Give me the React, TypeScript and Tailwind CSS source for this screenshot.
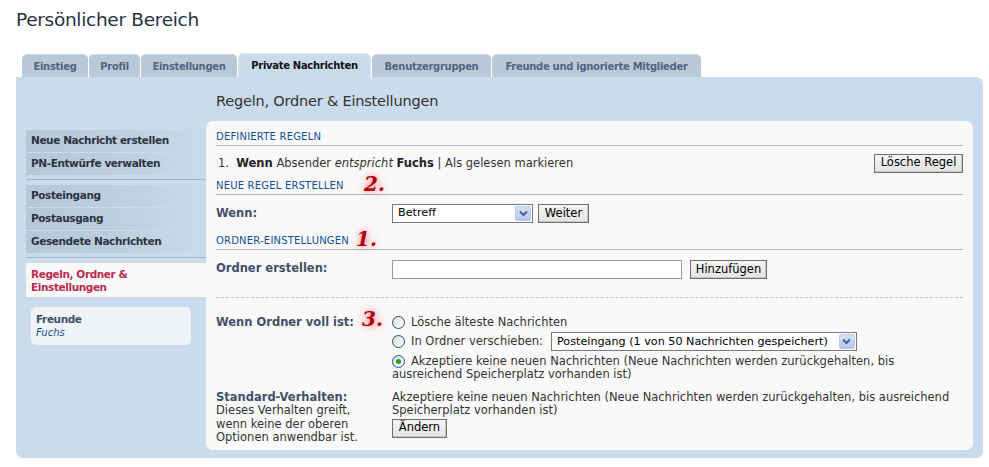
import React from "react";

const Radio = ({ checked = false }: { checked?: boolean }) => (
  <span className="inline-flex w-[13px] h-[13px] rounded-full border border-[#1c5180] bg-gradient-to-br from-[#dcdcd7] to-white items-center justify-center mr-[6px] shrink-0">
    {checked && <span className="w-[5px] h-[5px] rounded-full bg-[#21a121]" />}
  </span>
);

const SelectBox = ({ value, w }: { value: string; w: string }) => (
  <div className={`${w} h-[19px] border border-[#7a7a7a] bg-white flex items-center justify-between pl-[5px] pr-px text-[11.2px] text-black`}>
    <span className="truncate">{value}</span>
    <span className="w-[16px] h-[15px] bg-gradient-to-b from-[#d4e0fb] to-[#b4c7f3] border border-[#b9c9ef] flex items-center justify-center rounded-[2px] shrink-0">
      <svg width="9" height="7" viewBox="0 0 9 7">
        <path d="M1 1.5 L4.5 5 L8 1.5" fill="none" stroke="#4d6185" strokeWidth="2" />
      </svg>
    </span>
  </div>
);

const Btn = ({ children, w }: { children: React.ReactNode; w: string }) => (
  <button className={`${w} h-[19px] border border-[#6f6f6f] bg-gradient-to-b from-[#f4f4f4] to-[#e4e4e4] text-[11.5px] text-black leading-none shadow-[inset_-1px_-1px_0_#c6c6c6]`}>
    {children}
  </button>
);

const H3 = ({ children, note }: { children: React.ReactNode; note?: React.ReactNode }) => (
  <div className="relative border-b border-[#a9b8c6] h-[15px] text-[10px] leading-[12px] tracking-[0.2px] text-[#115098] font-['DejaVu_Sans',sans-serif] uppercase">
    {children}
    {note}
  </div>
);

const Note = ({ n, cls }: { n: string; cls: string }) => (
  <span
    className={`absolute ${cls} text-[20px] leading-none font-bold italic text-[#b00010] font-['DejaVu_Serif',serif] [text-shadow:0_0_6px_rgba(255,60,60,0.55),0_0_12px_rgba(255,80,80,0.35)] tracking-normal normal-case`}
  >
    {n}
  </span>
);

const SideItem = ({ children }: { children: React.ReactNode }) => (
  <div className="h-[22px] mb-px pl-[5px] flex items-center bg-gradient-to-r from-[#b6c7d7] via-[#bdcede] to-[#cadceb] text-[10.5px] font-bold text-[#2d3440] font-['DejaVu_Sans',sans-serif] tracking-[-0.4px]">
    {children}
  </div>
);

const tabCls =
  "h-[23px] rounded-t-[5px] bg-[#b9c9d8] border-t border-[#c9d6e2] text-[#536482] text-[10px] font-bold flex items-center justify-center font-['DejaVu_Sans',sans-serif] tracking-[-0.3px]";

export default function App() {
  return (
    <div className="w-[989px] h-[467px] bg-white font-['DejaVu_Sans',sans-serif] text-[#333] overflow-hidden">
      <div className="pl-[16px] pt-[7px] h-[53px] text-[18.5px] leading-[26px] text-[#28313f] font-['DejaVu_Sans',sans-serif] tracking-[-0.3px]">
        Persönlicher Bereich
      </div>
      <div className="flex pl-[22px] h-[24px] items-end gap-px">
        <div className={`${tabCls} w-[66px]`}>Einstieg</div>
        <div className={`${tabCls} w-[51px]`}>Profil</div>
        <div className={`${tabCls} w-[96px]`}>Einstellungen</div>
        <div className="w-[133px] h-[24px] rounded-t-[5px] bg-[#cadceb] border-t border-x border-[#dde8f1] text-[#111] text-[10px] font-bold flex items-center justify-center font-['DejaVu_Sans',sans-serif] tracking-[-0.3px]">
          Private Nachrichten
        </div>
        <div className={`${tabCls} w-[119px]`}>Benutzergruppen</div>
        <div className={`${tabCls} w-[209px]`}>Freunde und ignorierte Mitglieder</div>
      </div>
      <div className="ml-[16px] w-[967px] h-[381px] bg-[#cadceb] rounded-b-[7px] rounded-tr-[7px] px-[10px] flex flex-col">
        <div className="h-[44px] pl-[190px] pt-[14px] text-[14.5px] leading-[20px] text-[#333] font-['DejaVu_Sans',sans-serif] tracking-[-0.2px]">
          Regeln, Ordner &amp; Einstellungen
        </div>
        <div className="flex">
          <div className="w-[180px] pt-[9px] shrink-0">
            <SideItem>Neue Nachricht erstellen</SideItem>
            <SideItem>PN-Entwürfe verwalten</SideItem>
            <div className="h-px bg-[#9fb1c2] mt-[4px] mb-[5px]" />
            <SideItem>Posteingang</SideItem>
            <SideItem>Postausgang</SideItem>
            <SideItem>Gesendete Nachrichten</SideItem>
            <div className="h-px bg-[#9fb1c2] mt-[4px] mb-[5px]" />
            <div className="h-[34px] bg-[#f9f9f9] pl-[5px] pt-[5px] text-[10.5px] leading-[13px] font-bold text-[#bc2a4d] tracking-[-0.4px]">
              Regeln, Ordner &amp;
              <br />
              Einstellungen
            </div>
            <div className="ml-[5px] mt-[10px] w-[160px] h-[38px] rounded-[5px] bg-[#eef3f8] pl-[5px] pt-[5px]">
              <div className="text-[10.5px] leading-[14px] font-bold text-[#425067] tracking-[-0.4px]">Freunde</div>
              <div className="text-[10px] leading-[14px] italic text-[#105289]">Fuchs</div>
            </div>
          </div>
          <div className="w-[767px] h-[329px] bg-[#f9f9f9] rounded-[7px] px-[10px] pt-[10px] text-[11.5px] text-[#333]">
            <H3>Definierte Regeln</H3>
            <div className="h-[34px] flex items-center justify-between pl-[2px]">
              <div className="text-[11.5px] leading-[14px] text-[#333]">
                1.&nbsp;&nbsp;<b className="text-[#222]">Wenn</b> Absender <i>entspricht</i> <b className="text-[#222]">Fuchs</b> | Als gelesen markieren
              </div>
              <Btn w="w-[89px]">Lösche Regel</Btn>
            </div>
            <H3 note={<Note n="2." cls="left-[148px] -top-[6px]" />}>Neue Regel erstellen</H3>
            <div className="h-[40px] flex items-start pt-[9px]">
              <div className="w-[176px] font-bold text-[#425067] text-[11.5px] leading-[18px]">Wenn:</div>
              <SelectBox value="Betreff" w="w-[141px]" />
              <div className="ml-[5px]">
                <Btn w="w-[51px]">Weiter</Btn>
              </div>
            </div>
            <H3 note={<Note n="1." cls="left-[140px] -top-[6px]" />}>Ordner-Einstellungen</H3>
            <div className="h-[47px] flex items-start pt-[10px]">
              <div className="w-[176px] font-bold text-[#425067] text-[11.5px] leading-[17px]">Ordner erstellen:</div>
              <input className="w-[290px] h-[19px] border border-[#999] bg-white outline-none" />
              <div className="ml-[8px]">
                <Btn w="w-[77px]">Hinzufügen</Btn>
              </div>
            </div>
            <div className="border-t border-dashed border-[#c4c4c4]" />
            <div className="flex pt-[16px]">
              <div className="w-[176px] shrink-0 relative font-bold text-[#425067] text-[11.5px] leading-[16px]">
                Wenn Ordner voll ist:
                <Note n="3." cls="left-[146px] -top-[5px]" />
              </div>
              <div className="text-[11.5px] leading-[13px]">
                <div className="h-[16px] flex items-center">
                  <Radio />
                  Lösche älteste Nachrichten
                </div>
                <div className="h-[20px] flex items-center mt-px">
                  <Radio />
                  In Ordner verschieben:
                  <div className="ml-[8px]">
                    <SelectBox value="Posteingang (1 von 50 Nachrichten gespeichert)" w="w-[306px]" />
                  </div>
                </div>
                <div className="h-[14px] flex items-center mt-[3px] whitespace-nowrap">
                  <Radio checked />
                  Akzeptiere keine neuen Nachrichten (Neue Nachrichten werden zurückgehalten, bis
                </div>
                <div className="leading-[13px] whitespace-nowrap">ausreichend Speicherplatz vorhanden ist)</div>
              </div>
            </div>
            <div className="flex pt-[10px]">
              <div className="w-[176px] shrink-0 text-[11.5px] leading-[13.3px] whitespace-nowrap">
                <b className="text-[#425067]">Standard-Verhalten:</b>
                <br />
                Dieses Verhalten greift,
                <br />
                wenn keine der oberen
                <br />
                Optionen anwendbar ist.
              </div>
              <div className="text-[11.5px] leading-[13.3px] w-[570px]">
                Akzeptiere keine neuen Nachrichten (Neue Nachrichten werden zurückgehalten, bis ausreichend Speicherplatz vorhanden ist)
                <div className="mt-[1px]">
                  <Btn w="w-[55px]">Ändern</Btn>
                </div>
              </div>
            </div>
          </div>
        </div>
      </div>
    </div>
  );
}
